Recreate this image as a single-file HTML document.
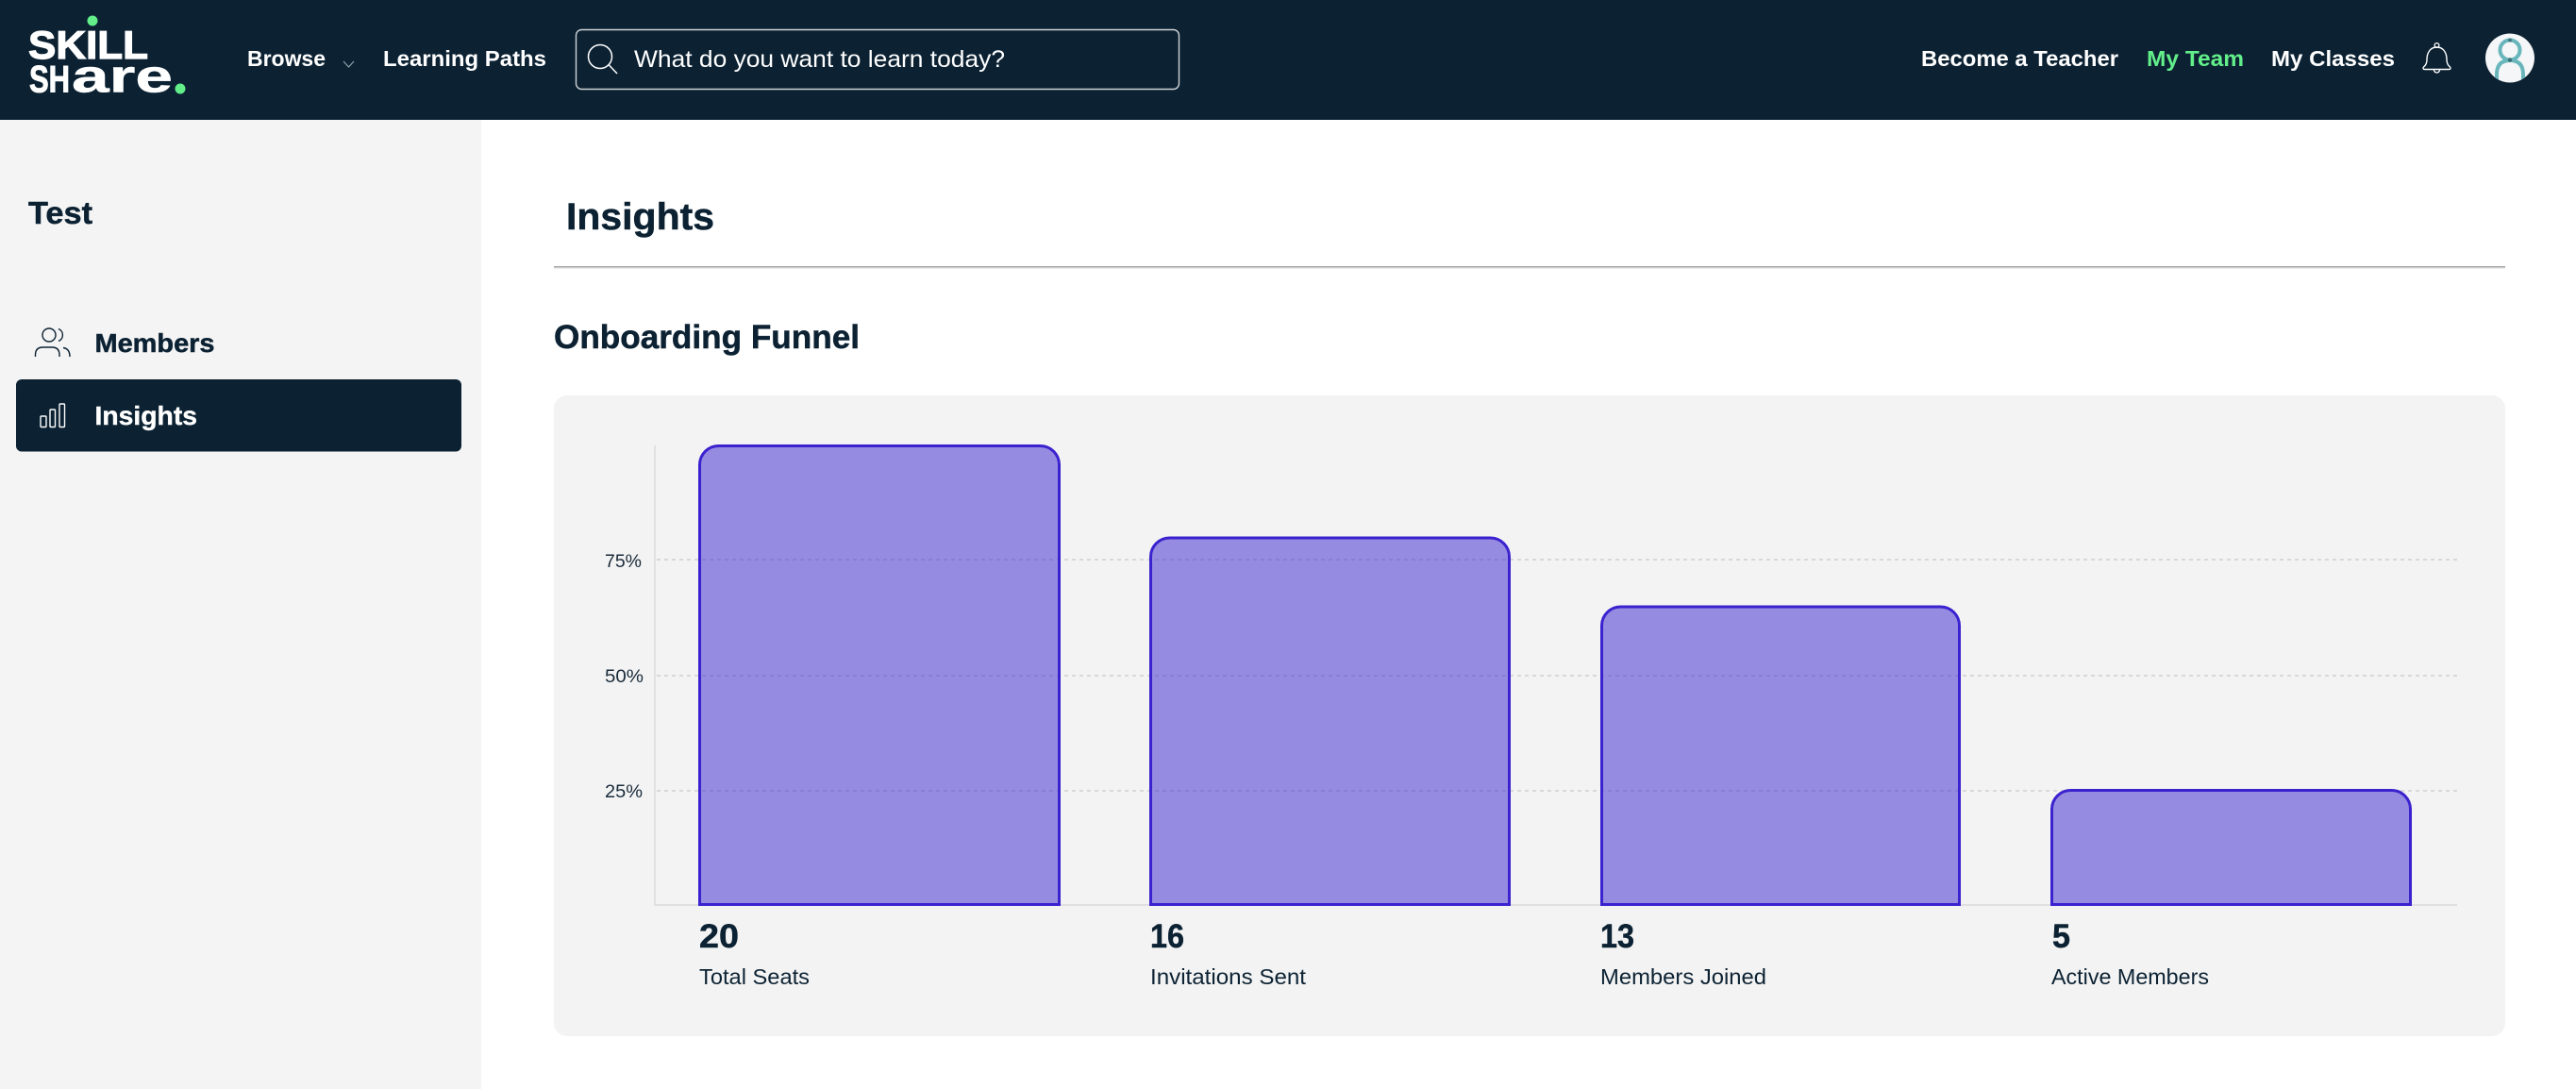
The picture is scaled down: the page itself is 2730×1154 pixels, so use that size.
<!DOCTYPE html>
<html lang="en">
<head>
<meta charset="utf-8">
<title>Insights</title>
<style>
html,body{margin:0;padding:0;background:#fff;width:2730px;height:1154px;overflow:hidden}
svg{display:block}
text{font-family:"Liberation Sans",sans-serif;white-space:pre}
.b{font-weight:700}
.d{fill:#0c2233}
.w{fill:#fff}
.h{stroke:#0c2233;stroke-width:.5}
</style>
</head>
<body>
<svg xmlns="http://www.w3.org/2000/svg" width="2730" height="1154" viewBox="0 0 2730 1154">
<defs>
<clipPath id="av"><circle cx="2660" cy="61.5" r="26"/></clipPath>
</defs>
<rect width="2730" height="1154" fill="#fff"/>
<rect y="127" width="510" height="1027" fill="#f4f4f4"/>
<rect width="2730" height="127" fill="#0c2233"/>

<!-- Logo -->
<text class="b w" x="30" y="62" font-size="42" stroke="#fff" stroke-width="1.2" textLength="127" lengthAdjust="spacingAndGlyphs">SKILL</text>
<text class="b w" x="31" y="97.5" font-size="40" stroke="#fff" stroke-width="1" textLength="43" lengthAdjust="spacingAndGlyphs">SH</text>
<text class="b w" x="76" y="97.5" font-size="49" stroke="#fff" stroke-width=".5" textLength="107" lengthAdjust="spacingAndGlyphs">are</text>
<circle cx="98" cy="22" r="5.5" fill="#62ef8a"/>
<circle cx="191" cy="94" r="5.5" fill="#62ef8a"/>

<!-- Nav left -->
<text class="b w" x="262" y="70" font-size="23" textLength="83" lengthAdjust="spacingAndGlyphs">Browse</text>
<path d="M364 65 L369.5 71 L375 65" fill="none" stroke="#8fa0aa" stroke-width="1.2"/>
<text class="b w" x="406" y="70" font-size="23.5" textLength="173" lengthAdjust="spacingAndGlyphs">Learning Paths</text>

<!-- Search -->
<rect x="610.5" y="31.5" width="639" height="63" rx="6" fill="none" stroke="#cfd3d6" stroke-width="1.4"/>
<circle cx="636" cy="60" r="12.5" fill="none" stroke="#fff" stroke-width="1.5"/>
<path d="M645 68.5 L654 78" fill="none" stroke="#fff" stroke-width="1.5"/>
<text class="w" x="672" y="71" font-size="25" textLength="393" lengthAdjust="spacingAndGlyphs">What do you want to learn today?</text>

<!-- Nav right -->
<text class="b w" x="2036" y="70" font-size="23" textLength="209" lengthAdjust="spacingAndGlyphs">Become a Teacher</text>
<text class="b" fill="#62ef8a" x="2275" y="70" font-size="23" textLength="103" lengthAdjust="spacingAndGlyphs">My Team</text>
<text class="b w" x="2407" y="70" font-size="23" textLength="131" lengthAdjust="spacingAndGlyphs">My Classes</text>

<!-- Bell -->
<path d="M2582.5 50 C2575.5 50 2572 56 2572 63 C2572 67 2570.5 69.5 2568.5 71 Q2567 73.5 2570 73.5 H2595 Q2598 73.5 2596.5 71 C2594.5 69.5 2593 67 2593 63 C2593 56 2589.5 50 2582.5 50 Z" fill="none" stroke="#fff" stroke-width="1.4"/>
<circle cx="2582.5" cy="48" r="2.4" fill="none" stroke="#fff" stroke-width="1.3"/>
<path d="M2579.5 74 A3 3 0 0 0 2585.5 74" fill="none" stroke="#fff" stroke-width="1.3"/>

<!-- Avatar -->
<circle cx="2660" cy="61.5" r="26" fill="#f5f6f8"/>
<g clip-path="url(#av)" fill="none" stroke="#68b6bb" stroke-width="4">
<circle cx="2660" cy="53" r="10.5"/>
<path d="M2646 90 V79 Q2646 64 2660 64 Q2674 64 2674 79 V90"/>
</g>
<circle cx="2660" cy="42.5" r="2" fill="#2f5f68" opacity=".7"/>
<circle cx="2660" cy="63.5" r="2.2" fill="#2f5f68" opacity=".8"/>

<!-- Sidebar -->
<text class="b d h" x="30" y="237" font-size="33" textLength="68" lengthAdjust="spacingAndGlyphs">Test</text>
<g fill="none" stroke="#0c2233" stroke-width="1.4">
<circle cx="52" cy="355" r="7"/>
<path d="M37.5 378 V376 Q37.5 368 45.5 368 H55 Q63 368 63 376 V378"/>
<path d="M62 348.5 A7 7 0 0 1 62 361.5"/>
<path d="M67 368.5 Q74 369.5 74 378"/>
</g>
<text class="b d h" x="100.5" y="373" font-size="28" textLength="127" lengthAdjust="spacingAndGlyphs">Members</text>
<rect x="17" y="402" width="472" height="76.5" rx="6" fill="#0c2233"/>
<g fill="none" stroke="#fff" stroke-width="1.4">
<rect x="43" y="441" width="6" height="11.5" rx="1"/>
<rect x="53" y="434" width="5.5" height="18.5" rx="1"/>
<rect x="63" y="428" width="5.5" height="24.5" rx="1"/>
</g>
<text class="b w" x="100.5" y="450" font-size="28" stroke="#fff" stroke-width=".4" textLength="108.5" lengthAdjust="spacingAndGlyphs">Insights</text>

<!-- Main heading -->
<text class="b d h" x="600" y="243" font-size="40" textLength="157" lengthAdjust="spacingAndGlyphs">Insights</text>
<rect x="587" y="282" width="2068" height="1.6" fill="#a8a8a8"/>
<rect x="587" y="283.6" width="2068" height="1.4" fill="#ececec"/>
<text class="b d h" x="587" y="369" font-size="35" textLength="324" lengthAdjust="spacingAndGlyphs">Onboarding Funnel</text>

<!-- Panel -->
<rect x="587" y="419" width="2068" height="679" rx="14" fill="#f3f3f3"/>

<!-- Grid -->
<g stroke="#d8d8da" stroke-width="2" stroke-dasharray="4 4" fill="none">
<path d="M696 593 H2604"/>
<path d="M696 716 H2604"/>
<path d="M696 838 H2604"/>
</g>
<path d="M694 472 V960 M693 959 H2604" fill="none" stroke="#e0e0e3" stroke-width="2"/>

<g fill="#1a2b3a" font-size="19.5">
<text x="641" y="601" textLength="39" lengthAdjust="spacingAndGlyphs">75%</text>
<text x="641" y="723" textLength="41" lengthAdjust="spacingAndGlyphs">50%</text>
<text x="641" y="845" textLength="40" lengthAdjust="spacingAndGlyphs">25%</text>
</g>

<!-- Bars -->
<g fill="rgba(56,36,206,.5)" stroke="#3a22cf" stroke-width="3">
<path d="M741.5 958.5 V492.5 A20 20 0 0 1 761.5 472.5 H1102.5 A20 20 0 0 1 1122.5 492.5 V958.5 Z"/>
<path d="M1219.5 958.5 V590 A20 20 0 0 1 1239.5 570 H1579.5 A20 20 0 0 1 1599.5 590 V958.5 Z"/>
<path d="M1697.5 958.5 V663 A20 20 0 0 1 1717.5 643 H2056.5 A20 20 0 0 1 2076.5 663 V958.5 Z"/>
<path d="M2174.5 958.5 V857.5 A20 20 0 0 1 2194.5 837.5 H2534.5 A20 20 0 0 1 2554.5 857.5 V958.5 Z"/>
</g>

<!-- Values -->
<g font-size="35" font-weight="700" fill="#0c2233" stroke="#0c2233" stroke-width=".5">
<text x="741" y="1004" textLength="42" lengthAdjust="spacingAndGlyphs">20</text>
<text x="1219" y="1004" textLength="36" lengthAdjust="spacingAndGlyphs">16</text>
<text x="1696" y="1004" textLength="36" lengthAdjust="spacingAndGlyphs">13</text>
<text x="2175" y="1004" textLength="19" lengthAdjust="spacingAndGlyphs">5</text>
</g>
<g fill="#0c2233" font-size="23">
<text x="741" y="1043" textLength="117" lengthAdjust="spacingAndGlyphs">Total Seats</text>
<text x="1219" y="1043" textLength="165" lengthAdjust="spacingAndGlyphs">Invitations Sent</text>
<text x="1696" y="1043" textLength="176" lengthAdjust="spacingAndGlyphs">Members Joined</text>
<text x="2174" y="1043" textLength="167" lengthAdjust="spacingAndGlyphs">Active Members</text>
</g>
</svg>
</body>
</html>
